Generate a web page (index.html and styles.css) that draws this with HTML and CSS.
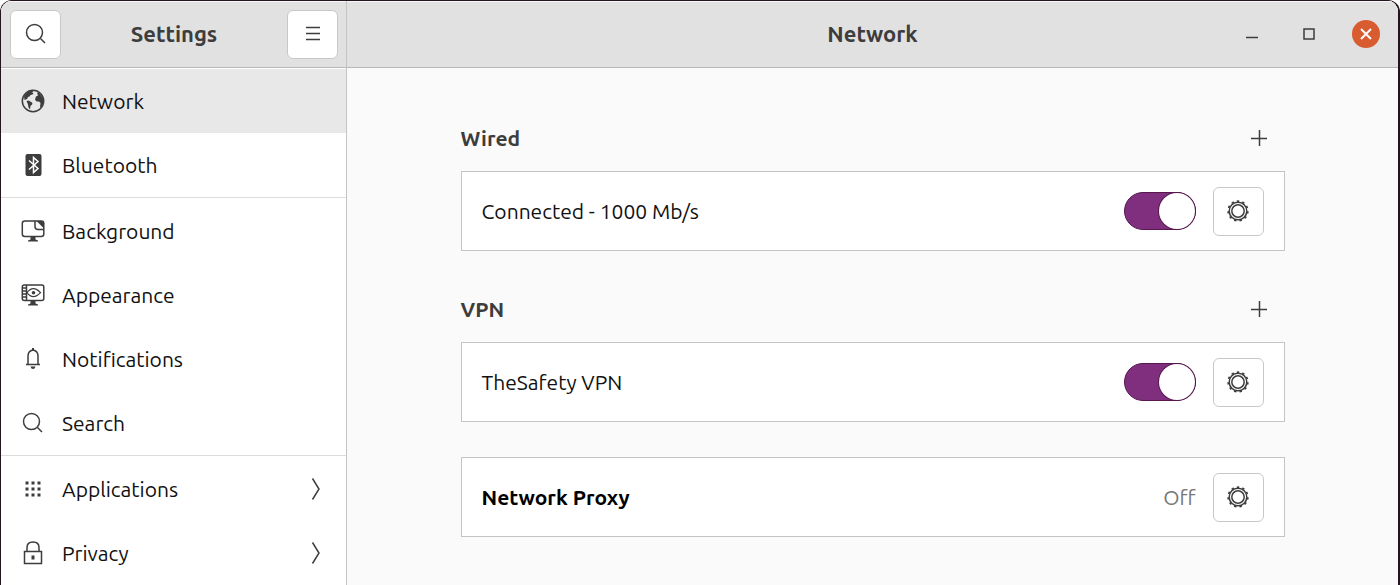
FILE: index.html
```html
<!DOCTYPE html>
<html lang="en">
<head>
  <meta charset="UTF-8" />
  <meta name="viewport" content="width=device-width, initial-scale=1.0"/>
  <title>Settings</title>
  <link rel="stylesheet" href="styles.css">
</head>
<body>

  <!-- Shared icons -->
  <svg class="sprite" aria-hidden="true">
    <symbol id="search" viewBox="0 0 24 24">
      <circle cx="10.500" cy="10.500" r="8"/>
      <path d="M16.500 16.500l4.500 4.500"/>
    </symbol>
    <symbol id="gear" viewBox="0 0 24 24">
      <circle cx="12" cy="12" r="8.800" stroke-width="1.500"/>
      <circle cx="12" cy="12" r="6.200" stroke-width="1.500"/>
      <circle cx="12" cy="12" r="9.900" stroke-width="1.600" pathLength="11" stroke-dasharray=".44 .56" transform="rotate(-97 12 12)"/>
    </symbol>
    <symbol id="plus" viewBox="0 0 24 24">
      <path d="M4 12.500h16M12.500 4v16"/>
    </symbol>
    <symbol id="chevron" viewBox="0 0 10 24">
      <path d="M1.500 1.500l6.500 10.500-6.500 10.500"/>
    </symbol>
  </svg>

  <div class="window">
    <aside class="sidebar">
      <header class="titlebar side-bar">
        <button class="box-btn" aria-label="Search"><svg class="icon"><use href="#search"/></svg></button>
        <h1>Settings</h1>
        <button class="box-btn" aria-label="Menu">
          <svg class="icon" viewBox="0 0 24 24"><path d="M5 5.500h14M5 11.500h14M5 17.500h14"/></svg>
        </button>
      </header>

      <nav>
        <a href="#" class="item active">
          <svg class="icon" viewBox="0 0 24 24">
            <circle cx="12" cy="12" r="10.700"/>
            <path class="fill" d="M3 7.500Q5 3 10 1.500l2.500.5L11 3.500l1.500.5-1 1.500-2 .5-1 1.500-1.500.5-1 2L3.500 11zM5.500 12l2-.5 3.500 2 .5 1.500-2 2-.5 3.500-1.500-2-.5-3zM16 3.500l2.500.5 4 6-.5 5-2 3.500-1-.5.500-4-1.500-1.500-2.500 0-1.500-2 1-3 2-1z"/>
          </svg>
          <span>Network</span>
        </a>
        <a href="#" class="item">
          <svg class="icon" viewBox="0 0 24 24">
            <rect class="fill" x="4.500" y="1" width="16" height="22" rx="2"/>
            <path class="light" d="M8 7.500l9 8-4.500 4V4.500l4.500 4-9 8"/>
          </svg>
          <span>Bluetooth</span>
        </a>
        <hr>
        <a href="#" class="item">
          <svg class="icon" viewBox="0 0 24 24">
            <rect x="1.300" y="2" width="21.500" height="15.500" rx="2.500"/>
            <path class="fill" d="M9.500 18h5v2.500l2.500 1V22.500H7V21.500l2.500-1z"/>
            <path class="fill" d="M15.500 2l7.500 7.500V4.500L21 2z"/>
            <path d="M14 2v5.500q0 3 3 3h6"/>
          </svg>
          <span>Background</span>
        </a>
        <a href="#" class="item">
          <svg class="icon" viewBox="0 0 24 24">
            <rect x="1.300" y="2" width="21.500" height="15.500" rx="2"/>
            <path d="M5.500 2v15.500M1.500 5h4M1.500 8h4M1.500 11h4M1.500 14h4"/>
            <path d="M6 9.700q6-8 13.500 0-7.500 8-13.500 0z" stroke-width="1.200"/>
            <circle class="fill" cx="12.500" cy="9.700" r="1.800"/>
            <path class="fill" d="M9.500 18h5v2.500l2.500 1V22.500H7V21.500l2.500-1z"/>
          </svg>
          <span>Appearance</span>
        </a>
        <a href="#" class="item">
          <svg class="icon" viewBox="0 0 24 24">
            <path d="M5 17.500h14M7 17.500V9q0-5 5-6 5 1 5 6v8.500"/>
            <path class="fill" d="M11 1h2v2h-2zM9.500 19.500h5q-.5 2.500-2.500 2.500t-2.500-2.500z"/>
          </svg>
          <span>Notifications</span>
        </a>
        <a href="#" class="item">
          <svg class="icon"><use href="#search"/></svg>
          <span>Search</span>
        </a>
        <hr>
        <a href="#" class="item">
          <svg class="icon" viewBox="0 0 24 24">
            <path class="fill" d="M4.500 4.500h3v3h-3zM10.500 4.500h3v3h-3zM16.500 4.500h3v3h-3zM4.500 10.500h3v3h-3zM10.500 10.500h3v3h-3zM16.500 10.500h3v3h-3zM4.500 16.500h3v3h-3zM10.500 16.500h3v3h-3zM16.500 16.500h3v3h-3z"/>
          </svg>
          <span>Applications</span>
          <svg class="chevron"><use href="#chevron"/></svg>
        </a>
        <a href="#" class="item">
          <svg class="icon" viewBox="0 0 24 24">
            <rect x="3.500" y="10.500" width="17" height="12"/>
            <path d="M6 10.500V6.500q0-5.500 6-5.500t6 5.500v4"/>
            <path class="fill" d="M10.500 14.500h3v4h-3z"/>
          </svg>
          <span>Privacy</span>
          <svg class="chevron"><use href="#chevron"/></svg>
        </a>
      </nav>
    </aside>

    <main>
      <header class="titlebar main-bar">
        <h1>Network</h1>
        <div class="controls">
          <button aria-label="Minimize"><svg viewBox="0 0 28 28"><path d="M8 17.500h12"/></svg></button>
          <button aria-label="Maximize"><svg viewBox="0 0 28 28"><rect x="9" y="9" width="10" height="10"/></svg></button>
          <button class="close" aria-label="Close"><svg viewBox="0 0 28 28"><path d="M9 9l10 10M19 9L9 19"/></svg></button>
        </div>
      </header>

      <div class="content">
        <section>
          <div class="heading">
            <h2>Wired</h2>
            <button class="add" aria-label="Add wired connection"><svg class="icon"><use href="#plus"/></svg></button>
          </div>
          <div class="card">
            <label for="wired">Connected - 1000 Mb/s</label>
            <input type="checkbox" class="switch" id="wired" checked>
            <button class="box-btn" aria-label="Wired options"><svg class="icon"><use href="#gear"/></svg></button>
          </div>
        </section>

        <section>
          <div class="heading">
            <h2>VPN</h2>
            <button class="add" aria-label="Add VPN"><svg class="icon"><use href="#plus"/></svg></button>
          </div>
          <div class="card">
            <label for="vpn">TheSafety VPN</label>
            <input type="checkbox" class="switch" id="vpn" checked>
            <button class="box-btn" aria-label="VPN options"><svg class="icon"><use href="#gear"/></svg></button>
          </div>
        </section>

        <section>
          <div class="card">
            <h3>Network Proxy</h3>
            <span class="state">Off</span>
            <button class="box-btn" aria-label="Proxy options"><svg class="icon"><use href="#gear"/></svg></button>
          </div>
        </section>
      </div>
    </main>
  </div>

</body>
</html>
```
FILE: styles.css
```css
* {
  box-sizing: border-box;
}

body {
  margin: 0;
  background: #fff;
  font-family: Ubuntu, "Noto Sans", sans-serif;
  font-size: 21px;
  line-height: 28px;
  color: #111;
}

h1, h2, h3 {
  margin: 0;
  font-size: 21px;
  color: #3d3d3d;
}

h1 {
  font-size: 22px;
}

button {
  padding: 0;
  border: none;
  background: none;
  cursor: pointer;
}

svg {
  display: block;
  fill: none;
  stroke: #3d3d3d;
  stroke-width: 1.5;
}

.sprite {
  display: none;
}

.icon {
  width: 24px;
  height: 24px;
  flex: none;
}

.fill {
  fill: #3d3d3d;
  stroke: none;
}

.light {
  stroke: #fff;
}

.window {
  display: flex;
  min-height: 100vh;
  border: 1px solid #24141f;
  border-right-width: 2px;
  border-bottom: none;
  border-radius: 12px 12px 0 0;
  overflow: hidden;
}

/* Title bars */
.titlebar {
  height: 67px;
  align-items: center;
  background: #e1e1e1;
  border-bottom: 1px solid #b8b8b8;
  box-shadow: inset 0 1px #f6f6f6;
}

.side-bar {
  display: flex;
  justify-content: space-between;
  padding: 0 8px 0 9px;
}

.main-bar {
  display: grid;
  grid-template-columns: 1fr auto 1fr;
  padding: 0 18px;
}

.main-bar h1 {
  grid-column: 2;
}

.box-btn {
  display: flex;
  align-items: center;
  justify-content: center;
  width: 51px;
  height: 49px;
  background: #fff;
  border: 1px solid #c8c8c8;
  border-radius: 6px;
}

.controls {
  display: flex;
  justify-content: flex-end;
  gap: 29px;
}

.controls button {
  width: 28px;
  height: 28px;
  border-radius: 50%;
}

.controls .close {
  background: #d95b30;
}

.close svg {
  stroke: #fff;
  stroke-width: 2;
}

/* Sidebar */
.sidebar {
  flex: none;
  width: 346px;
  background: #fff;
  border-right: 1px solid #c4c4c4;
}

nav {
  padding-top: 1px;
}

.item {
  display: flex;
  align-items: center;
  gap: 17px;
  height: 64px;
  padding: 0 25px 0 20px;
  color: inherit;
  text-decoration: none;
}

.item span {
  flex: 1;
}

.item.active {
  background: #e8e8e8;
}

.chevron {
  width: 10px;
  height: 24px;
}

hr {
  height: 1px;
  margin: 0 0 1px;
  border: none;
  background: #dcdcdc;
}

/* Content */
main {
  flex: 1;
  background: #fafafa;
}

.content {
  display: flex;
  flex-direction: column;
  gap: 35px;
  max-width: 824px;
  margin: 0 auto;
  padding: 47px 0 32px;
}

.heading {
  display: flex;
  align-items: center;
  justify-content: space-between;
  height: 46px;
  margin-bottom: 10px;
}

.add {
  display: flex;
  align-items: center;
  justify-content: center;
  width: 52px;
  height: 44px;
}

.card {
  display: flex;
  align-items: center;
  gap: 17px;
  height: 80px;
  padding: 0 20px;
  background: #fff;
  border: 1px solid #c4c4c4;
}

.card label,
.card h3 {
  flex: 1;
}

.card h3 {
  color: #000;
}

.state {
  color: #777;
}

.switch {
  appearance: none;
  display: flex;
  width: 72px;
  height: 38px;
  margin: 0;
  background: #c8c8c8;
  border: 1px solid #999;
  border-radius: 19px;
  cursor: pointer;
}

.switch::before {
  content: "";
  width: 36px;
  height: 36px;
  background: #fff;
  border-radius: 50%;
}

.switch:checked {
  justify-content: flex-end;
  background: #7f2f7e;
  border-color: #56184f;
}

.switch:checked::before {
  box-shadow: 0 0 0 1px #56184f;
}
```
